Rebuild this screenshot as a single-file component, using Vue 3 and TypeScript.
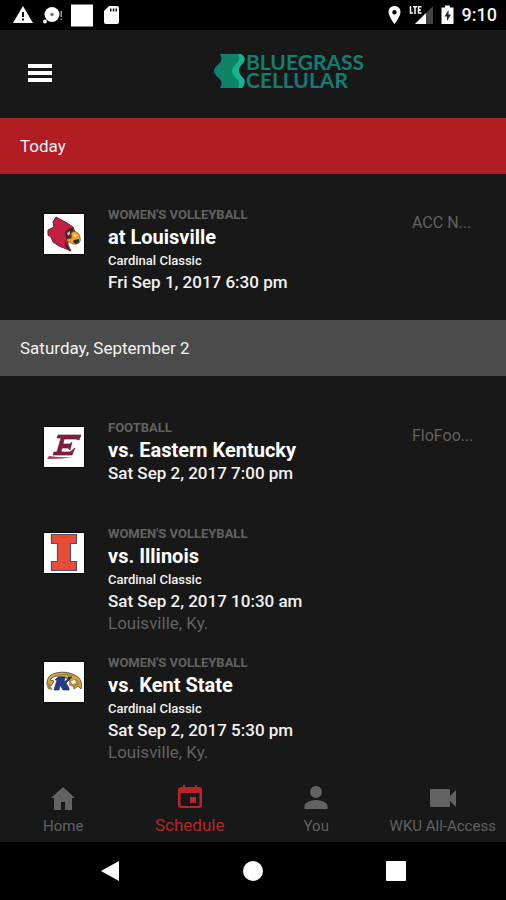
<script setup lang="ts">
type Logo = 'cardinal' | 'colonel' | 'illini' | 'flash'
type Icon = 'home' | 'calendar' | 'person' | 'video'

interface Game {
  logo: Logo
  sport: string
  opponent: string
  event?: string
  time: string
  place?: string
  channel?: string
}

interface Day {
  label: string
  today: boolean
  games: Game[]
}

const days: Day[] = [
  {
    label: 'Today',
    today: true,
    games: [
      { logo: 'cardinal', sport: "Women's Volleyball", opponent: 'at Louisville', event: 'Cardinal Classic', time: 'Fri Sep 1, 2017 6:30 pm', channel: 'ACC N...' },
    ],
  },
  {
    label: 'Saturday, September 2',
    today: false,
    games: [
      { logo: 'colonel', sport: 'Football', opponent: 'vs. Eastern Kentucky', time: 'Sat Sep 2, 2017 7:00 pm', channel: 'FloFoo...' },
      { logo: 'illini', sport: "Women's Volleyball", opponent: 'vs. Illinois', event: 'Cardinal Classic', time: 'Sat Sep 2, 2017 10:30 am', place: 'Louisville, Ky.' },
      { logo: 'flash', sport: "Women's Volleyball", opponent: 'vs. Kent State', event: 'Cardinal Classic', time: 'Sat Sep 2, 2017 5:30 pm', place: 'Louisville, Ky.' },
    ],
  },
]

const tabs: { label: string; icon: Icon; active: boolean }[] = [
  { label: 'Home', icon: 'home', active: false },
  { label: 'Schedule', icon: 'calendar', active: true },
  { label: 'You', icon: 'person', active: false },
  { label: 'WKU All-Access', icon: 'video', active: false },
]
</script>

<template>
  <div class="screen">
    <div class="status">
      <svg width="108" height="24" viewBox="0 0 108 24" fill="#fff">
        <path d="M10 3 20 20H0Z" />
        <path d="M9 9h2v5H9zM9 15.500h2v2H9z" fill="#111" />
        <circle cx="39" cy="11.500" r="7.500" />
        <circle cx="39" cy="11.500" r="1.800" fill="#777" />
        <circle cx="32" cy="18.500" r="2" />
        <path d="M47.500 8h1.500v6h-1.500zM47.500 15.500h1.500v1.500h-1.500z" fill="#999" />
        <path d="M58 1.500h22v22H58z" />
        <path d="M96 3h8q2 0 2 2v14q0 2-2 2H93q-2 0-2-2V8Z" />
        <path d="M97 5.500h1.500v3H97zM99.800 5.500h1.500v3h-1.500zM102.500 5.500h1.500v3h-1.500z" fill="#111" />
      </svg>
      <div class="status-right">
        <svg width="66" height="24" viewBox="0 0 66 24" fill="#fff">
          <path fill-rule="evenodd" d="M6.500 3C3 3 .5 5.500.5 9c0 4.500 6 12 6 12s6-7.500 6-12c0-3.500-2.500-6-6-6Zm0 4a2.200 2.200 0 1 1 0 4.400 2.200 2.200 0 0 1 0-4.400Z" />
          <path d="M45 3v18H27Z" fill="#444" />
          <path d="M38 10v11H27Z" />
          <path d="M22.500 3v7H25M25 3.800h4M27 3.800V11M33.500 3.800h-3V10h3M30.500 7h2.500" fill="none" stroke="#fff" stroke-width="1.500" />
          <path d="M57 2.500h5V4.500h3.500v16.500h-12V4.500H57Z" />
          <path d="m60.500 7-4 6.500h2.500V18l4-6.500h-2.500Z" fill="#222" />
        </svg>
        <span class="clock">9:10</span>
      </div>
    </div>

    <header class="bar">
      <button class="menu" type="button" aria-label="Menu">
        <svg width="24" height="18" viewBox="0 0 24 18" fill="#fff">
          <path d="M0 0h24v4H0zM0 7h24v4H0zM0 14h24v4H0z" />
        </svg>
      </button>
      <div class="sponsor">
        <svg width="31" height="34" viewBox="0 0 31 34">
          <path d="M6 0h21q5 3 3 8-6 6-5 9 0 3 5 8 2 5-2 9H6q4-5-1-10-5-4-5-7t5-7q5-5 1-10Z" fill="#0d8465" />
          <path d="M6 0h5q-2 6-5 10-3 4-3 7t3 7q4 4 4 10H6q4-5-1-10-5-4-5-7t5-7q5-5 1-10Z" fill="#147b79" />
          <path d="M23 0h4q5 3 3 8-6 6-5 9 0 3 5 8 2 5-2 9h-4q3-5-1-9-5-5-5-8t5-8q4-4 1-9Z" fill="#17b48f" />
        </svg>
        <span class="sponsor-name">BLUEGRASS<br />CELLULAR</span>
      </div>
    </header>

    <main class="schedule">
      <section v-for="day in days" :key="day.label">
        <h2 class="day" :class="{ today: day.today }">{{ day.label }}</h2>
        <article v-for="game in day.games" :key="game.sport + game.time" class="game" :class="{ featured: game.channel }">
          <svg class="logo" width="40" height="40" viewBox="0 0 40 40">
            <g v-if="game.logo === 'cardinal'">
              <path d="m12 3 11 6 6 4 2 5-7 9 0 4 3 6-12-5-6-4-2-5-3-2V16l6-3-1-5Z" fill="#c51e43" stroke="#532833" />
              <path d="m21 18 5-4 3 0 0 4-3 2 1 5-3 3-2-4Z" fill="#30292c" />
              <path d="m23 19 3-2 0 3-2 2Z" fill="#bbb" />
              <path d="M28 18q6-2 8 5 1 4-1 6-3 2-6 1l-6-3 0-2 5-1-1-4Z" fill="#f1a329" stroke="#6b4c20" stroke-width=".7" />
              <path d="m30 26 5-1 0 3-3 2-3-2Z" fill="#29292b" />
              <circle cx="31" cy="21.500" r="1.500" fill="#fbd98a" />
              <path d="m21 26 2 5 3 6-5-5Z" fill="#222" />
            </g>
            <g v-else-if="game.logo === 'colonel'">
              <path d="M14 8h23l-2 5-3-1H20l-1 5h7l2-2-2 8-2-2h-6l-1 4h9l5-4-3 7H9l1-3h3l4-14h-4Z" fill="#8c183c" stroke="#57273a" stroke-width=".7" />
              <path d="m3 32 2-3q12 2 26 1-13 2-28 2Z" fill="#a43656" />
            </g>
            <g v-else-if="game.logo === 'illini'">
              <path d="M7.500 1.500h25v9h-6v18h6v9h-25v-9h6v-18h-6Z" fill="#ea4d37" stroke="#465170" stroke-width="1.200" />
            </g>
            <g v-else>
              <path d="M3 21q0-8 9-10 12-3 22 4 5 5 3 12l-3-3-4 3q1-8-8-11-12-5-16 2l4 1-3 5Z" fill="#d8a33a" stroke="#72623b" />
              <path d="m2 21 2 6 5 1-4-6M11 13l14-2 5 3-12-1Z" fill="#9c8447" />
              <path d="m25 18 8-1 3 5-7 3-4-2Z" fill="#b08a38" />
              <path d="m27 19 4-1 1 3-4 1Z" fill="#fff" />
              <path d="M14 15h7l-1 5 4-3v-2h4l-6 6 3 5v2h-6l-3-5-1 5h-5l3-10h-2Z" fill="#223d83" stroke="#132653" stroke-width=".6" />
            </g>
          </svg>
          <div class="details">
            <p class="sport">{{ game.sport }}</p>
            <h3 class="opponent">{{ game.opponent }}</h3>
            <p v-if="game.event" class="event">{{ game.event }}</p>
            <p class="time">{{ game.time }}</p>
            <p v-if="game.place" class="place">{{ game.place }}</p>
          </div>
          <p v-if="game.channel" class="channel">{{ game.channel }}</p>
        </article>
      </section>
    </main>

    <nav class="tabs">
      <a v-for="tab in tabs" :key="tab.label" href="#" class="tab" :class="{ active: tab.active }">
        <svg width="28" height="28" viewBox="0 0 28 28" fill="currentColor">
          <path v-if="tab.icon === 'home'" d="M14 4 2 15h3v12h7v-8h4v8h7V15h3Z" />
          <path v-else-if="tab.icon === 'calendar'" fill-rule="evenodd" d="M7 3h2v2h10V3h2v2h2q3 0 3 3v15q0 3-3 3H5q-3 0-3-3V8q0-3 3-3h2ZM4.500 11v12q0 1 1 1h17q1 0 1-1V11ZM14 15h6v6h-6Z" />
          <path v-else-if="tab.icon === 'person'" d="M14 3a6 6 0 1 1 0 12 6 6 0 0 1 0-12ZM2.500 26v-3c0-4 7.500-6 11.500-6s11.500 2 11.500 6v3Z" />
          <path v-else d="M2 6h18q1 0 1 1v6l6-6v17l-6-6v5q0 1-1 1H2q-1 0-1-1V7q0-1 1-1Z" />
        </svg>
        <span>{{ tab.label }}</span>
      </a>
    </nav>

    <div class="system">
      <button type="button" aria-label="Back">
        <svg width="20" height="20" viewBox="0 0 20 20" fill="#fff"><path d="M19 0v20L1 10Z" /></svg>
      </button>
      <button type="button" aria-label="Home screen">
        <svg width="20" height="20" viewBox="0 0 20 20" fill="#fff"><circle cx="10" cy="10" r="10" /></svg>
      </button>
      <button type="button" aria-label="Recent apps">
        <svg width="20" height="20" viewBox="0 0 20 20" fill="#fff"><rect width="20" height="20" rx="1" /></svg>
      </button>
    </div>
  </div>
</template>

<style>
body {
  margin: 0;
  background: #181818;
}
</style>

<style scoped>
.screen {
  display: flex;
  flex-direction: column;
  min-height: 100vh;
  background: #181818;
  color: #f2f2f2;
  font-family: Roboto, "Liberation Sans", sans-serif;
}

svg {
  display: block;
  flex: none;
}

h2,
h3,
p {
  margin: 0;
}

button {
  display: grid;
  place-items: center;
  padding: 0;
  border: 0;
  background: none;
}

.status {
  display: flex;
  justify-content: space-between;
  align-items: center;
  height: 30px;
  padding: 0 9px 0 13px;
  background: #000;
}

.status-right {
  display: flex;
  align-items: center;
  gap: 8px;
}

.clock {
  font-size: 18px;
  font-weight: 500;
  line-height: 24px;
}

.bar {
  box-sizing: border-box;
  display: grid;
  grid-template-columns: 80px 1fr;
  align-items: center;
  height: 88px;
  padding-bottom: 2px;
}

.menu {
  width: 80px;
  height: 56px;
}

.sponsor {
  display: flex;
  justify-content: center;
  align-items: center;
  gap: 1px;
  padding: 0 8px 4px 0;
}

.sponsor-name {
  color: #147d72;
  font-family: Lato, sans-serif;
  font-size: 21px;
  font-weight: 700;
  line-height: 18px;
}

.schedule {
  flex: 1;
}

.day {
  height: 56px;
  padding: 0 20px;
  background: #4b4b4b;
  font-size: 17px;
  font-weight: 400;
  line-height: 56px;
}

.day.today {
  background: #b01e24;
}

.game {
  display: grid;
  grid-template-columns: auto 1fr auto;
  align-content: center;
  padding: 2px 28px 16px 44px;
}

.game:last-child {
  padding-bottom: 8px;
}

.game.featured {
  box-sizing: border-box;
  min-height: 146px;
  padding-bottom: 0;
}

.logo {
  margin-top: 9px;
  background: #fff;
  outline: 1px solid #080808;
}

.details {
  min-width: 0;
  padding-left: 24px;
}

.sport {
  color: #626262;
  font-size: 13px;
  font-weight: 700;
  line-height: 20px;
  text-transform: uppercase;
}

.opponent {
  color: #fff;
  font-size: 20px;
  font-weight: 700;
  line-height: 25px;
}

.event {
  font-size: 13px;
  font-weight: 500;
  line-height: 22px;
}

.time {
  font-size: 17px;
  font-weight: 500;
  line-height: 20px;
}

.place {
  color: #626262;
  font-size: 17px;
  line-height: 24px;
}

.channel {
  width: 66px;
  padding-top: 8px;
  color: #626262;
  font-size: 16px;
  line-height: 20px;
  white-space: nowrap;
}

.tabs {
  display: grid;
  grid-template-columns: repeat(4, 1fr);
  height: 70px;
}

.tab {
  display: flex;
  flex-direction: column;
  align-items: center;
  gap: 5px;
  padding-top: 11px;
  color: #626262;
  font-size: 15px;
  line-height: 20px;
  text-decoration: none;
  white-space: nowrap;
}

.tab.active {
  padding-top: 10px;
  color: #b9242a;
  font-size: 17px;
}

.system {
  display: flex;
  justify-content: center;
  align-items: center;
  gap: 103px;
  height: 58px;
  background: #000;
}

.system button {
  width: 40px;
  height: 40px;
}
</style>
